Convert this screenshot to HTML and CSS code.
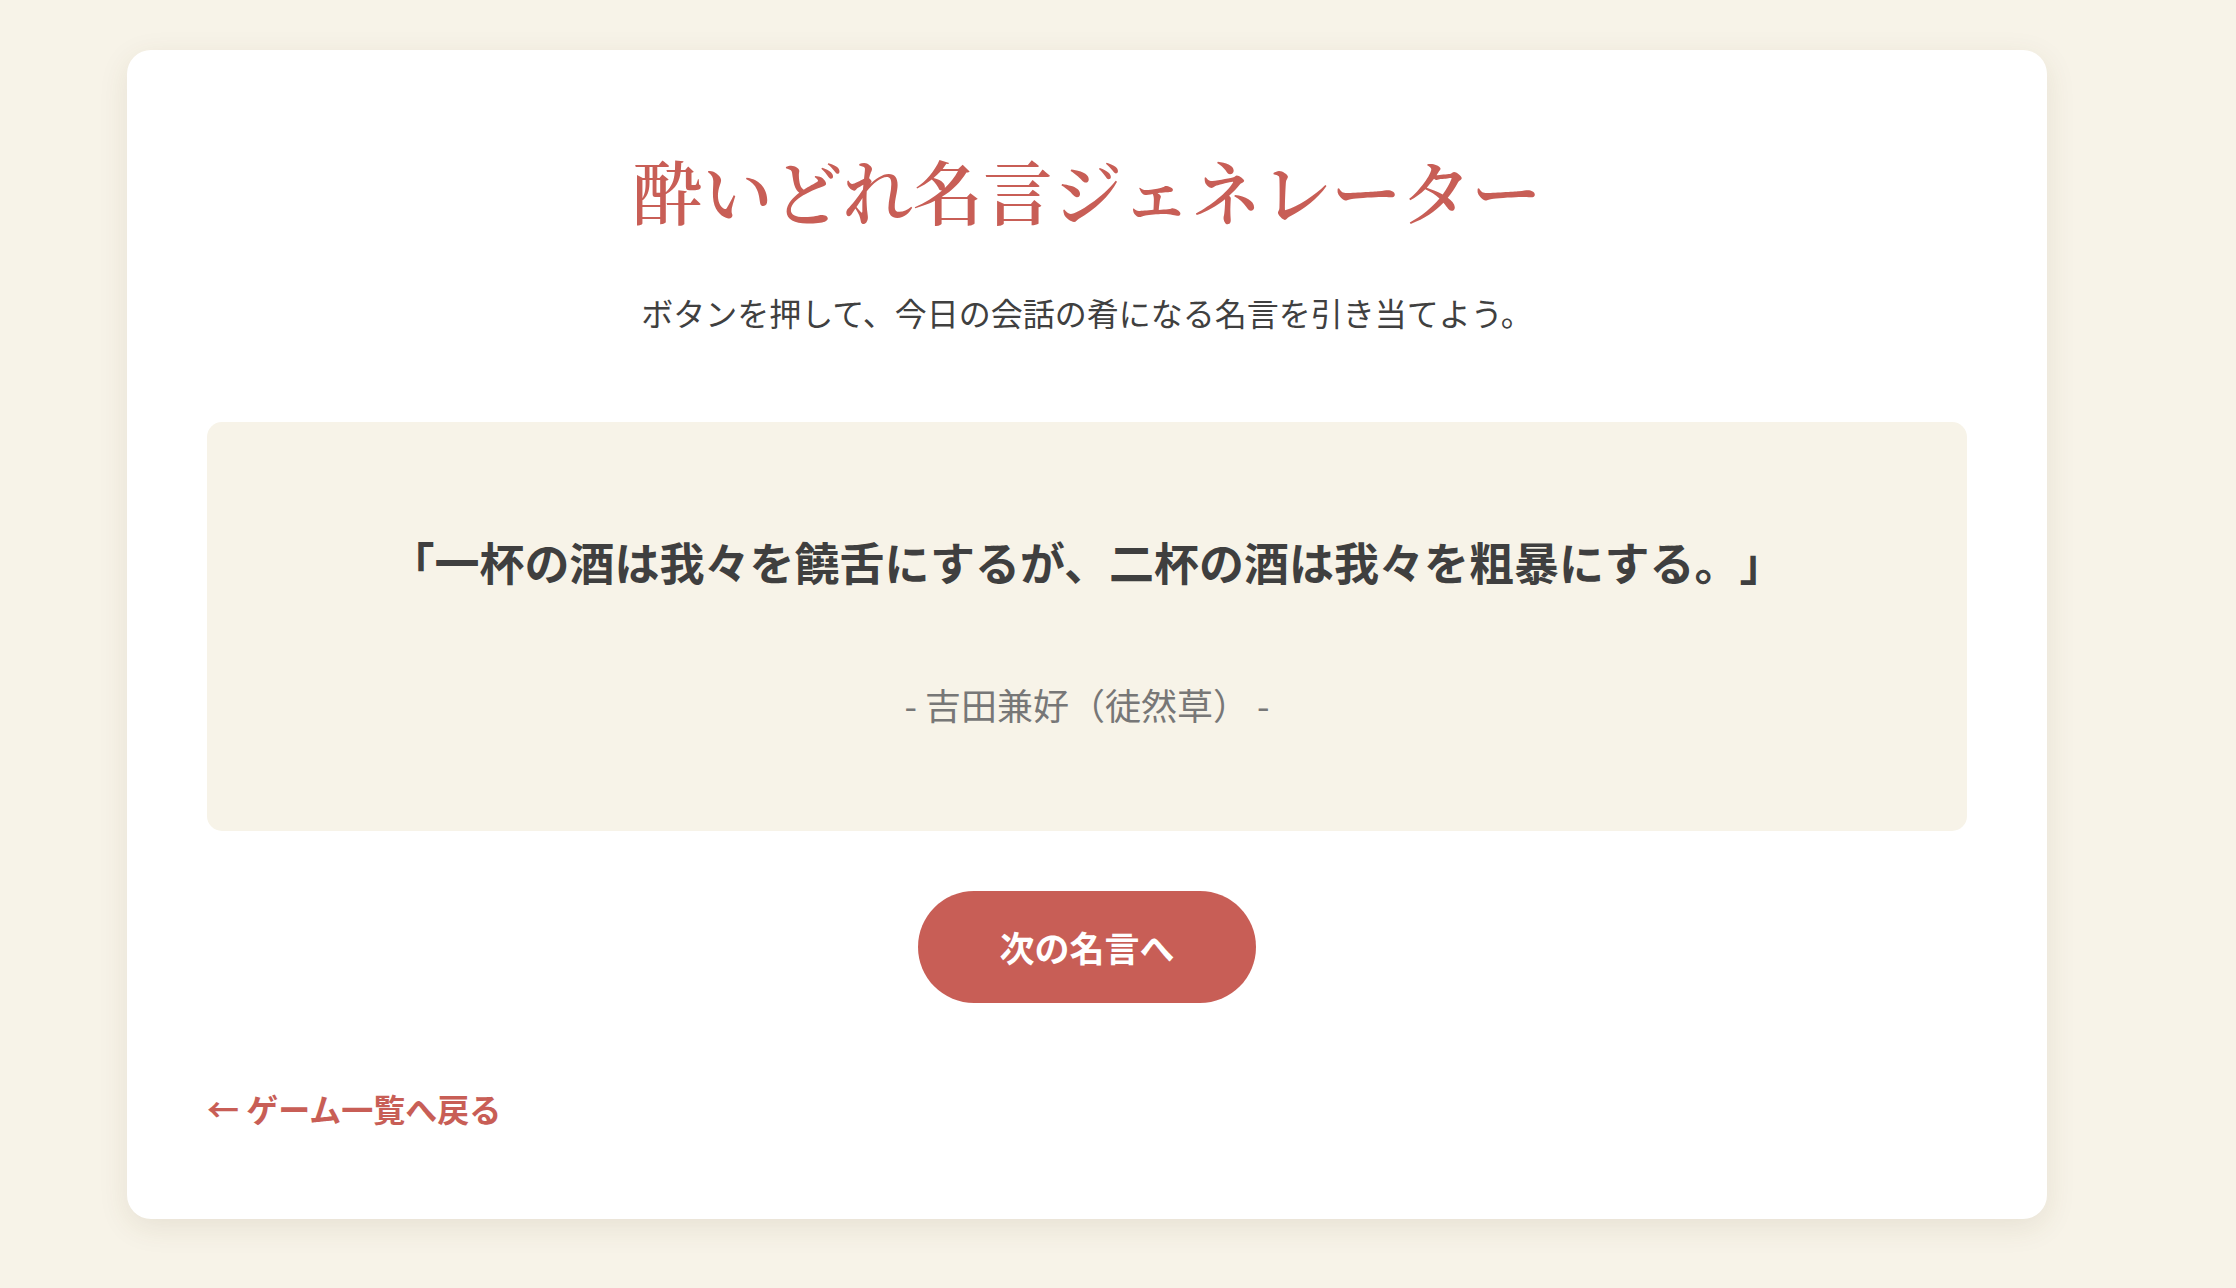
FILE: index.html
```html
<!DOCTYPE html>
<html lang="ja">

<head>
    <meta charset="UTF-8">
    <meta name="viewport" content="width=device-width, initial-scale=1.0">
    <title>酔いどれ名言ジェネレーター</title>
    <link rel="stylesheet" href="styles.css">
</head>

<body>
    <div class="card">
        <h1 class="title">酔いどれ名言ジェネレーター</h1>
        <p class="lead">ボタンを押して、今日の会話の肴になる名言を引き当てよう。</p>

        <div class="quote-box">
            <p class="quote" id="quote">「一杯の酒は我々を饒舌にするが、二杯の酒は我々を粗暴にする。」</p>
            <p class="author" id="author">- 吉田兼好（徒然草） -</p>
        </div>

        <div class="actions">
            <button class="btn" id="btn" type="button">次の名言へ</button>
        </div>

        <a class="back" href="#">← ゲーム一覧へ戻る</a>
    </div>
</body>

</html>
```

FILE: styles.css
```css
* {
    box-sizing: border-box;
}

body {
    margin: 0;
    padding: 50px 0 50px 127px;
    background-color: #f7f3e8;
    color: #404040;
    font-family: "Noto Sans CJK JP", "Noto Sans", sans-serif;
    text-spacing-trim: space-all;
}

.card {
    width: 1920px;
    padding: 80px 80px 85px;
    background-color: #fff;
    border-radius: 24px;
    box-shadow: 0 8px 30px rgba(90, 70, 30, 0.1);
}

.title {
    margin: 14px 0 0;
    font-family: "Noto Serif CJK JP", "Liberation Serif", serif;
    font-size: 70px;
    font-weight: 600;
    line-height: 1.3;
    text-align: center;
    color: #c85e56;
}

.lead {
    margin: 52px 0 0;
    font-size: 32px;
    line-height: 1.6;
    text-align: center;
    color: #404040;
}

.quote-box {
    margin-top: 84px;
    padding: 104px 40px 97px;
    background-color: #f7f3e8;
    border-radius: 15px;
    text-align: center;
}

.quote {
    margin: 0;
    font-size: 45px;
    font-weight: 700;
    line-height: 1.6;
    color: #3f3f3f;
}

.author {
    margin: 78px 0 0;
    font-size: 36px;
    line-height: 1.6;
    color: #777;
}

.actions {
    margin-top: 60px;
    text-align: center;
}

.btn {
    padding: 28px 81px;
    border: 0;
    border-radius: 60px;
    background-color: #c85e56;
    color: #fff;
    font-family: inherit;
    font-size: 35px;
    font-weight: 700;
    line-height: 1.6;
    cursor: pointer;
}

.back {
    display: inline-block;
    margin-top: 80px;
    font-size: 32px;
    font-weight: 700;
    line-height: 1.6;
    color: #c85e56;
    text-decoration: none;
}
```
